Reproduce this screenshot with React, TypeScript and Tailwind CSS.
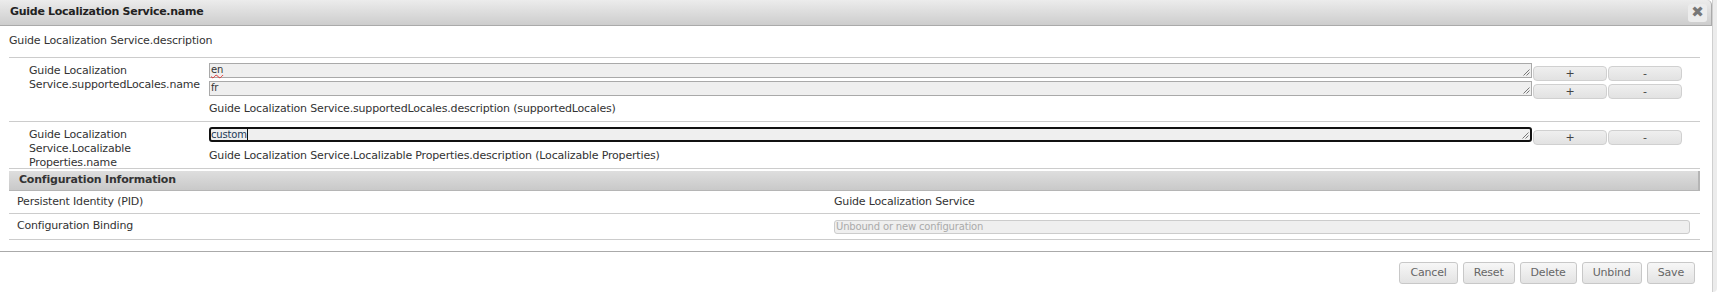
import React from "react";

const font = { fontFamily: '"DejaVu Sans", Verdana, Tahoma, sans-serif' };

function Grip() {
  return (
    <svg className="absolute right-[1px] bottom-[1px]" width="8" height="8" viewBox="0 0 8 8">
      <path d="M7.5 1.5 L1.5 7.5 M7.5 4.5 L4.5 7.5" stroke="#777" strokeWidth="1" />
    </svg>
  );
}

function Field({ value, focused, spell }: { value: string; focused?: boolean; spell?: boolean }) {
  return (
    <div
      className={
        focused
          ? "relative h-[15px] flex-1 bg-[#efefef] border-2 border-[#111] rounded-[3px] text-[10px] leading-[11px] text-[#1d3a56] flex items-start"
          : "relative h-[15px] flex-1 bg-[#efefef] border border-[#a9a9a9] text-[10px] leading-[12px] text-[#333] px-[1px] flex items-start"
      }
    >
      <span className={spell ? "underline decoration-wavy decoration-[#d33] decoration-1 underline-offset-[1px]" : ""}>
        {value}
      </span>
      {focused && <span className="w-px h-[11px] bg-[#111]" />}
      <Grip />
    </div>
  );
}

function SmallBtn({ label }: { label: string }) {
  return (
    <button className="w-[74px] h-[15px] bg-gradient-to-b from-[#efefef] to-[#e2e2e2] border border-[#d0d0d0] rounded-[4px] text-[11px] leading-[12px] text-[#444] flex items-center justify-center">
      {label}
    </button>
  );
}

function FieldLine({ value, focused, spell }: { value: string; focused?: boolean; spell?: boolean }) {
  return (
    <div className="flex items-start">
      <Field value={value} focused={focused} spell={spell} />
      <div className="flex gap-px pt-[3px] ml-px">
        <SmallBtn label="+" />
        <SmallBtn label="-" />
      </div>
    </div>
  );
}

function FooterBtn({ label }: { label: string }) {
  return (
    <button className="h-[22px] px-[10px] bg-gradient-to-b from-[#f7f7f7] to-[#e3e3e3] border border-[#c8c8c8] rounded-[3px] text-[11px] text-[#666]">
      {label}
    </button>
  );
}

export default function App() {
  return (
    <div className="w-[1717px] h-[296px] bg-white flex overflow-hidden text-[#333] tracking-[-0.17px]" style={font}>
      <div className="w-[1712px] flex flex-col">
        <div className="h-[26px] flex items-center justify-between pl-[10px] pr-[4px] bg-gradient-to-b from-[#ececec] to-[#cdcdcd] border-b border-r border-[#aaa] rounded-tr-[5px]">
          <span className="text-[11px] font-bold text-[#222] tracking-[-0.28px]">Guide Localization Service.name</span>
          <div className="w-[19px] h-[18px] rounded-[3px] bg-[#ececec] flex items-center justify-center text-[15px] font-bold text-[#777] leading-none">
            ✖
          </div>
        </div>

        <div className="pl-[9px] pr-[12px]">
          <div className="h-[31px] flex items-center text-[11px]">Guide Localization Service.description</div>

          <div className="border-t border-[#ccc] flex pt-[5px] h-[64px]">
            <div className="w-[200px] pl-[20px] text-[11px] leading-[14px] pt-[1px]">
              Guide Localization
              <br />
              Service.supportedLocales.name
            </div>
            <div className="flex-1 flex flex-col mr-[18px]">
              <FieldLine value="en" spell />
              <FieldLine value="fr" />
              <div className="text-[11px] pt-[2px]">
                Guide Localization Service.supportedLocales.description (supportedLocales)
              </div>
            </div>
          </div>

          <div className="border-t border-[#ccc] flex pt-[5px] h-[47px]">
            <div className="w-[200px] pl-[20px] text-[11px] leading-[14px] pt-[1px]">
              Guide Localization
              <br />
              Service.Localizable
              <br />
              Properties.name
            </div>
            <div className="flex-1 flex flex-col mr-[18px]">
              <FieldLine value="custom" focused />
              <div className="text-[11px] mt-[3px]">
                Guide Localization Service.Localizable Properties.description (Localizable Properties)
              </div>
            </div>
          </div>

          <div className="border-t border-[#ccc] pt-[2px]">
            <div className="h-[20px] flex items-center pl-[10px] bg-gradient-to-b from-[#dedede] to-[#c9c9c9] border-b border-r-2 border-[#b5b5b5] text-[11px] font-bold text-[#333] tracking-[-0.2px]">
              Configuration Information
            </div>
          </div>

          <div className="h-[23px] flex items-center border-b border-[#ccc] text-[11px]">
            <div className="w-[825px] pl-[8px]">Persistent Identity (PID)</div>
            <div>Guide Localization Service</div>
          </div>
          <div className="h-[26px] flex items-center border-b border-[#ccc] text-[11px]">
            <div className="w-[825px] pl-[8px]">Configuration Binding</div>
            <div className="flex-1 mr-[10px] h-[14px] bg-[#efefef] border border-[#ccc] rounded-[3px] text-[10px] leading-[12px] text-[#aaa] pl-px">
              Unbound or new configuration
            </div>
          </div>
        </div>

        <div className="mt-[11px] border-t border-[#aaa] flex justify-end gap-[5px] pt-[10px] pr-[17px]">
          <FooterBtn label="Cancel" />
          <FooterBtn label="Reset" />
          <FooterBtn label="Delete" />
          <FooterBtn label="Unbind" />
          <FooterBtn label="Save" />
        </div>
      </div>
      <div className="w-[5px] h-[292px] bg-[#ececec] border-l border-[#cfcfcf] rounded-br-[4px]" />
    </div>
  );
}
